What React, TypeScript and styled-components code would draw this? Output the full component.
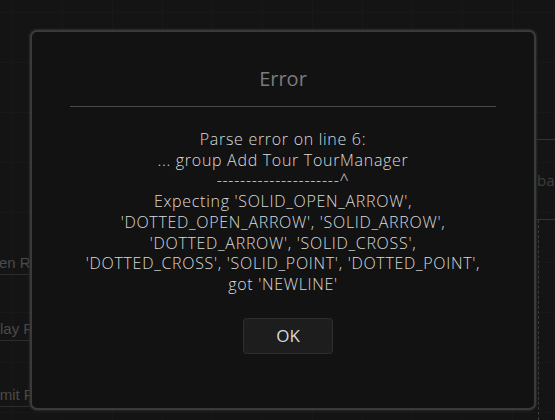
import styled, { createGlobalStyle } from "styled-components";

const GlobalStyle = createGlobalStyle`
  html, body {
    margin: 0;
    padding: 0;
    background: #141414;
  }
  body {
    font-family: "Open Sans", "Noto Sans", sans-serif;
  }
`;

const labels = [
  { text: "Open Requests", shift: 21 },
  { text: "Display Rules", shift: 30 },
  { text: "Submit Rules", shift: 27 },
];

const errorLines = [
  "Parse error on line 6:",
  "... group Add Tour TourManager",
  "---------------------^",
  "Expecting 'SOLID_OPEN_ARROW',",
  "'DOTTED_OPEN_ARROW', 'SOLID_ARROW',",
  "'DOTTED_ARROW', 'SOLID_CROSS',",
  "'DOTTED_CROSS', 'SOLID_POINT', 'DOTTED_POINT',",
  "got 'NEWLINE'",
];

const App = () => {
  return (
    <>
      <GlobalStyle />
      <Page>
        <Backdrop>
          <SideColumn>
            {labels.map((l) => (
              <FieldRow key={l.text}>
                <FieldLabel $shift={l.shift}>{l.text}</FieldLabel>
              </FieldRow>
            ))}
          </SideColumn>
          <Canvas />
          <RightColumn>
            <RightPanel>
              <PanelText>ba</PanelText>
            </RightPanel>
            <DashedLane />
          </RightColumn>
        </Backdrop>

        <Modal>
          <ModalHeader>
            <ModalTitle>Error</ModalTitle>
          </ModalHeader>
          <Divider />
          <ModalBody>
            {errorLines.map((line, i) => (
              <BodyLine key={i}>{line}</BodyLine>
            ))}
          </ModalBody>
          <ModalFooter>
            <OkButton>OK</OkButton>
          </ModalFooter>
        </Modal>
      </Page>
    </>
  );
};

const Page = styled.div`
  position: relative;
  width: 555px;
  height: 420px;
  overflow: hidden;
  background-color: #141414;
  background-image: linear-gradient(#181818 1px, transparent 1px),
    linear-gradient(90deg, #181818 1px, transparent 1px);
  background-size: 50px 50px;
  background-position: 12px 12px;
`;

const Backdrop = styled.div`
  display: flex;
  width: 100%;
  height: 100%;
`;

const SideColumn = styled.div`
  width: 90px;
  padding-top: 209px;
  display: flex;
  flex-direction: column;
  overflow: hidden;
`;

const FieldRow = styled.div`
  height: 66px;
  display: flex;
  align-items: flex-end;
  border-bottom: 1px solid #2c2c2c;
  box-sizing: border-box;
  padding-bottom: 3px;
`;

const FieldLabel = styled.span<{ $shift: number }>`
  margin-left: ${(p) => -p.$shift}px;
  white-space: nowrap;
  font-family: "Liberation Sans", Arial, sans-serif;
  font-size: 15px;
  color: #4a4a4a;
`;

const Canvas = styled.div`
  flex: 1;
`;

const RightColumn = styled.div`
  width: 19px;
  padding-top: 139px;
  display: flex;
  flex-direction: column;
`;

const RightPanel = styled.div`
  height: 81px;
  border-top: 1px solid #333;
  border-bottom: 1px solid #333;
  box-sizing: border-box;
  display: flex;
  align-items: center;
  overflow: hidden;
`;

const PanelText = styled.span`
  margin-left: 1px;
  font-family: "Open Sans", sans-serif;
  font-size: 15px;
  color: #3e3e3e;
  white-space: nowrap;
`;

const DashedLane = styled.div`
  flex: 1;
  width: 0;
  margin-left: 2px;
  border-left: 1px dashed #3a3a3a;
`;

const Modal = styled.div`
  position: absolute;
  left: 30px;
  top: 30px;
  width: 506px;
  height: 380px;
  box-sizing: border-box;
  background: #121212;
  border: 2px solid #3a3a3a;
  border-radius: 7px;
  box-shadow: 0 0 2px 1px #2a2a2a;
  display: flex;
  flex-direction: column;
`;

const ModalHeader = styled.div`
  padding: 35px 38px 15px;
  text-align: center;
`;

const ModalTitle = styled.h2`
  margin: 0;
  font-size: 20px;
  line-height: 24px;
  font-weight: 400;
  color: #7c7c7c;
`;

const Divider = styled.div`
  height: 1px;
  margin: 0 38px;
  background: #4a4a4a;
`;

const ModalBody = styled.div`
  padding-top: 22px;
  display: flex;
  flex-direction: column;
  align-items: center;
`;

const BodyLine = styled.div`
  font-size: 16px;
  line-height: 20.7px;
  font-weight: 300;
  color: #dadada;
  white-space: nowrap;
  letter-spacing: 0.7px;
`;

const ModalFooter = styled.div`
  padding-top: 23px;
  padding-left: 10px;
  display: flex;
  justify-content: center;
`;

const OkButton = styled.button`
  width: 90px;
  height: 36px;
  background: #1d1d1d;
  border: 1px solid #2f2f2f;
  border-radius: 4px;
  color: #d8d8d8;
  font-family: "Open Sans", sans-serif;
  font-size: 17px;
  font-weight: 400;
  cursor: pointer;
`;

export default App;
